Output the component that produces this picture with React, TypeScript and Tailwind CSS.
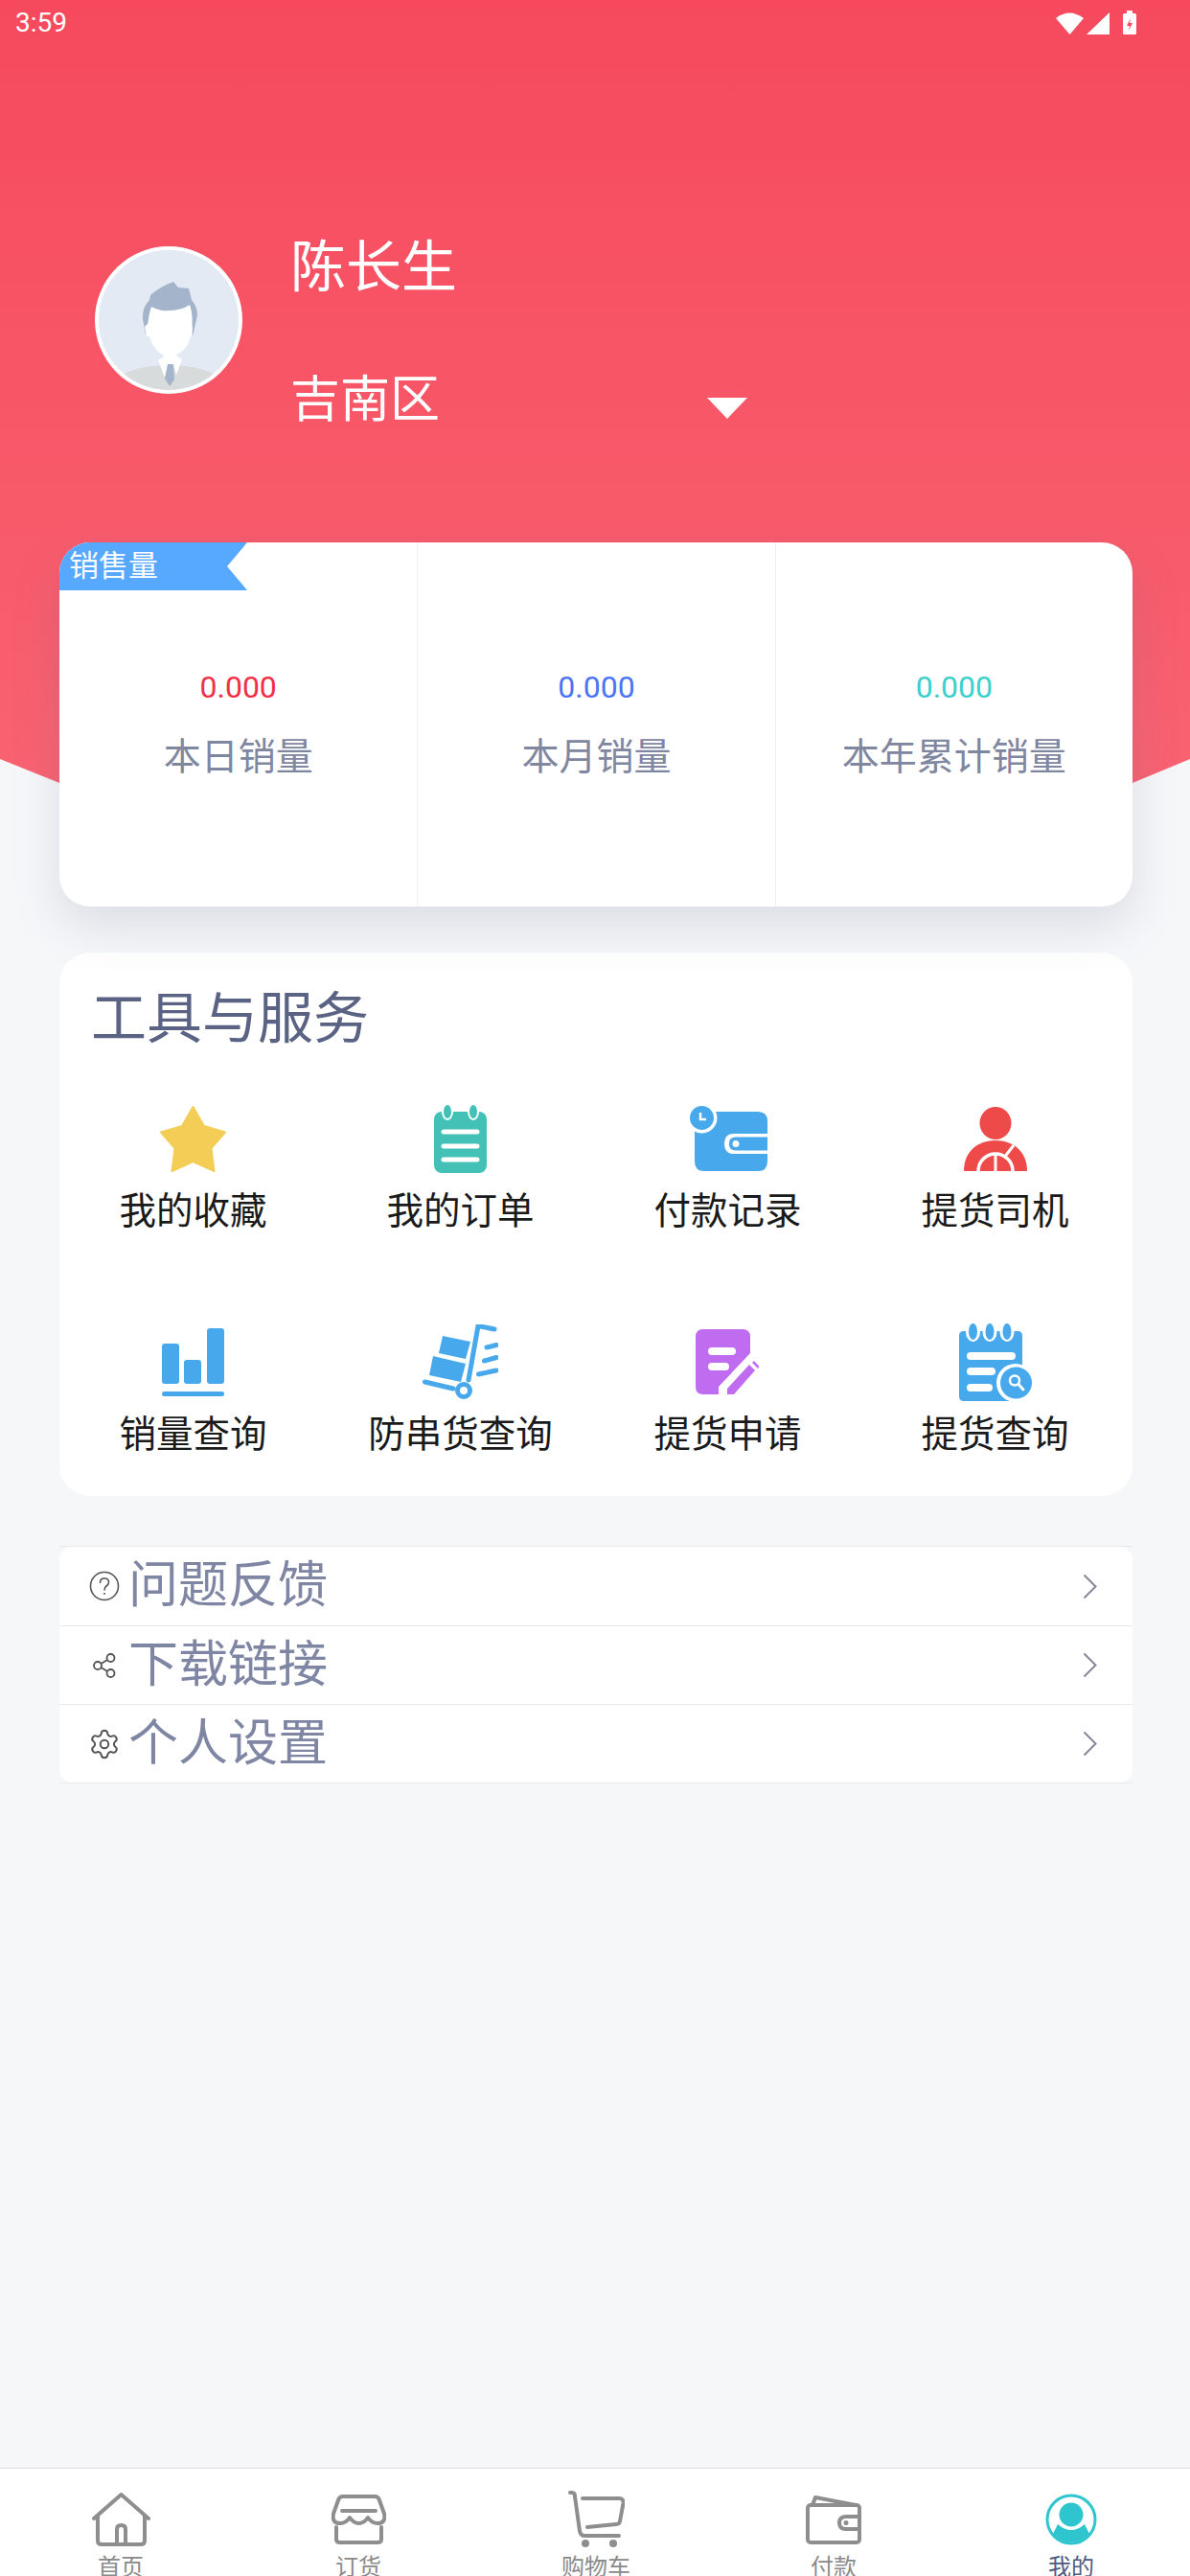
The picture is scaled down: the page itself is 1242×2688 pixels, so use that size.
import { Settings } from "lucide-react";
import type { ReactNode } from "react";

const stats = [
  { label: "本日销量", value: "0.000", color: "text-[#f22f45]" },
  { label: "本月销量", value: "0.000", color: "text-[#4a74f5]" },
  { label: "本年累计销量", value: "0.000", color: "text-[#3bd0cd]" },
];

function StarIcon() {
  return (
    <svg width="69" height="69" viewBox="0 0 69 69" fill="#f3cd55" stroke="#f3cd55" strokeWidth="2" strokeLinejoin="round">
      <polygon points="34.5,1 46,21 68,27.5 53.5,44 56.5,68 34.5,58 12.5,68 15.5,44 1,27.5 23,21" />
    </svg>
  );
}

function OrderIcon() {
  return (
    <svg width="55" height="71" viewBox="0 0 55 71">
      <rect x="0" y="7" width="55" height="64" rx="8" fill="#43c1b6" />
      <ellipse cx="14" cy="7" rx="6" ry="9" fill="#fff" />
      <ellipse cx="41" cy="7" rx="6" ry="9" fill="#fff" />
      <ellipse cx="14" cy="7" rx="4" ry="7" fill="#43c1b6" />
      <ellipse cx="41" cy="7" rx="4" ry="7" fill="#43c1b6" />
      <path d="M10 28H45M10 43H45M10 57H45" stroke="#fff" strokeWidth="5" strokeLinecap="round" />
    </svg>
  );
}

function PaymentIcon() {
  return (
    <svg width="82" height="68" viewBox="0 0 82 68">
      <path d="M6 16Q6 6 16 6H72Q82 6 82 16V58Q82 68 72 68H16Q6 68 6 58Z" fill="#47a8ec" />
      <circle cx="13.5" cy="12.5" r="16" fill="#fff" />
      <circle cx="13.5" cy="12.5" r="12.5" fill="#47a8ec" />
      <path d="M12 7V14H18" fill="none" stroke="#fff" strokeWidth="2.5" />
      <path d="M82 29H47Q37 29 37 39.5Q37 50 47 50H82Z" fill="#fff" />
      <path d="M82 32.5H49Q42 32.5 42 39.5Q42 46.5 49 46.5H82Z" fill="#47a8ec" />
      <circle cx="49" cy="39.5" r="3.5" fill="#fff" />
    </svg>
  );
}

function DriverIcon() {
  return (
    <svg width="66" height="67" viewBox="0 0 66 67">
      <ellipse cx="33" cy="17" rx="16.5" ry="17" fill="#ef4a4a" />
      <path d="M0 67C0 47 14 35 33 35C52 35 66 47 66 67Z" fill="#ef4a4a" />
      <path d="M15 67A18 18 0 0 1 51 67" fill="none" stroke="#fff" strokeWidth="3.5" />
      <path d="M33 50V67M52 40L42 53" stroke="#fff" strokeWidth="3" />
    </svg>
  );
}

function BarsIcon() {
  return (
    <svg width="65" height="71" viewBox="0 0 65 71" fill="#47a8ec">
      <rect x="0" y="16" width="18" height="42" rx="3" />
      <rect x="23" y="33" width="18" height="25" rx="3" />
      <rect x="47" y="0" width="18" height="58" rx="3" />
      <rect x="0" y="66" width="65" height="5" rx="2.5" />
    </svg>
  );
}

function TrolleyIcon() {
  return (
    <svg width="79" height="78" viewBox="0 0 79 78">
      <polygon points="21,12 50,18 45,36 17,30" fill="#47a8ec" />
      <polygon points="11,33 45,41 40,60 7,53" fill="#47a8ec" />
      <path d="M75 5L58 1.5L48 58M2.5 60L32 67M67 24L77 21.5M64.5 38L77 34.5M58.5 52L77 48" fill="none" stroke="#47a8ec" strokeWidth="5" strokeLinecap="round" />
      <circle cx="43" cy="69" r="6.5" fill="none" stroke="#47a8ec" strokeWidth="5" />
    </svg>
  );
}

function ApplyIcon() {
  return (
    <svg width="67" height="68" viewBox="0 0 67 68">
      <path d="M8 0H49Q57 0 57 8V25L24 60V68H8Q0 68 0 60V8Q0 0 8 0Z" fill="#c06cf0" />
      <path d="M17 23H38M17 39H31" stroke="#fff" strokeWidth="8" strokeLinecap="round" />
      <polygon points="33,62 56,37 62,43 40,68 33,68" fill="#c06cf0" />
      <polygon points="59,35 61,33 66.5,39 65,41" fill="#c06cf0" />
    </svg>
  );
}

function PickupSearchIcon() {
  return (
    <svg width="76" height="81" viewBox="0 0 76 81">
      <path d="M0 13Q0 8 5 8H61Q66 8 66 13V81H5Q0 81 0 76Z" fill="#47a8ec" />
      {[14.5, 32, 50].map((cx) => (
        <g key={cx}>
          <ellipse cx={cx} cy="9" rx="7.5" ry="10" fill="#fff" />
          <ellipse cx={cx} cy="8.5" rx="4.5" ry="8.5" fill="#47a8ec" />
        </g>
      ))}
      <path d="M12 34H55M12 50H34M12 67H31" stroke="#fff" strokeWidth="8" strokeLinecap="round" />
      <circle cx="59" cy="62" r="20" fill="#fff" />
      <circle cx="59.5" cy="62" r="16.5" fill="#47a8ec" />
      <circle cx="58" cy="59.5" r="5" fill="none" stroke="#fff" strokeWidth="2.5" />
      <path d="M62 63.5L67 69" stroke="#fff" strokeWidth="3" strokeLinecap="round" />
    </svg>
  );
}

const tools: { label: string; icon: ReactNode }[] = [
  { label: "我的收藏", icon: <StarIcon /> },
  { label: "我的订单", icon: <OrderIcon /> },
  { label: "付款记录", icon: <PaymentIcon /> },
  { label: "提货司机", icon: <DriverIcon /> },
  { label: "销量查询", icon: <BarsIcon /> },
  { label: "防串货查询", icon: <TrolleyIcon /> },
  { label: "提货申请", icon: <ApplyIcon /> },
  { label: "提货查询", icon: <PickupSearchIcon /> },
];

function QuestionIcon() {
  return (
    <svg width="32" height="32" viewBox="0 0 32 32" fill="none" stroke="#555" strokeWidth="1.6">
      <circle cx="16" cy="16" r="14.5" />
      <path d="M11.5 12.5Q11.5 8 16 8Q20.5 8 20.5 12Q20.5 14.5 18 16Q16 17.5 16 20" strokeLinecap="round" />
      <circle cx="16" cy="24" r="1" fill="#555" stroke="none" />
    </svg>
  );
}

function ShareIcon() {
  return (
    <svg width="24" height="26" viewBox="0 0 24 26" fill="none" stroke="#555" strokeWidth="1.8">
      <circle cx="5" cy="13" r="4" />
      <circle cx="18.5" cy="5" r="4" />
      <circle cx="18.5" cy="21" r="4" />
      <path d="M8.5 11L15 7M8.5 15L15 19" />
    </svg>
  );
}

function RowChevron() {
  return (
    <svg className="mr-[37px] ml-auto" width="15" height="27" viewBox="0 0 15 27" fill="none" stroke="#85879a" strokeWidth="2">
      <path d="M1.5 1.5L13.5 13.5L1.5 25.5" />
    </svg>
  );
}

const links: { label: string; icon: ReactNode }[] = [
  { label: "问题反馈", icon: <QuestionIcon /> },
  { label: "下载链接", icon: <ShareIcon /> },
  { label: "个人设置", icon: <Settings size={34} strokeWidth={1.4} color="#555" /> },
];

const tabStroke = { fill: "none", stroke: "#8e8e8e", strokeWidth: 4, strokeLinecap: "round", strokeLinejoin: "round" } as const;

function HomeTab() {
  return (
    <svg width="61" height="56" viewBox="0 0 61 56" {...tabStroke}>
      <path d="M2 27L30.5 2L59 27M6 24V50Q6 54 10 54H51Q55 54 55 50V24M26 54V38Q26 34 30.5 34Q35 34 35 38V54" />
    </svg>
  );
}

function StoreTab() {
  return (
    <svg width="57" height="52" viewBox="0 0 57 52" {...tabStroke}>
      <path d="M12 2H45Q49 2 50 6L55 20Q57 30 48 30Q42 30 38 24Q34 30 28.5 30Q23 30 19 24Q15 30 9 30Q0 30 2 20L7 6Q8 2 12 2ZM11 17H46M5 34V47Q5 50 9 50H48Q52 50 52 47V34" />
    </svg>
  );
}

function CartTab() {
  return (
    <svg width="60" height="60" viewBox="0 0 60 60" {...tabStroke}>
      <path d="M3 2H5Q8 2 8 6L13 42Q14 47 18 47H54M16 8H54Q59 8 58.5 13L55 32Q54.5 35 51 35L21 38" />
      <circle cx="19" cy="55" r="4" fill="#8e8e8e" stroke="none" />
      <circle cx="48" cy="55" r="4" fill="#8e8e8e" stroke="none" />
    </svg>
  );
}

function WalletTab() {
  return (
    <svg width="58" height="52" viewBox="0 0 58 52" {...tabStroke}>
      <rect x="2" y="11" width="54" height="39" rx="3" />
      <path d="M7 11L10 3L52 11M56 23H42Q35 23 35 29.5Q35 36 42 36H56" />
      <circle cx="42" cy="29.5" r="2.5" fill="#8e8e8e" stroke="none" />
    </svg>
  );
}

function MineTab() {
  return (
    <svg width="54" height="54" viewBox="0 0 54 54">
      <circle cx="27" cy="27" r="25" fill="#fff" stroke="#2fc5cf" strokeWidth="3" />
      <circle cx="27" cy="22" r="12.5" fill="#2fc5cf" />
      <path d="M8 42L13 32Q20 38 27 38Q34 38 41 32L46 42A25 25 0 0 1 8 42Z" fill="#2fc5cf" />
    </svg>
  );
}

const tabs: { label: string; icon: ReactNode; active?: boolean }[] = [
  { label: "首页", icon: <HomeTab /> },
  { label: "订货", icon: <StoreTab /> },
  { label: "购物车", icon: <CartTab /> },
  { label: "付款", icon: <WalletTab /> },
  { label: "我的", icon: <MineTab />, active: true },
];

function Avatar() {
  return (
    <div className="mt-[12px] h-[154px] w-[154px] shrink-0 overflow-hidden rounded-full border-[4px] border-white bg-[#e3eaf4]">
      <svg width="146" height="146" viewBox="4 4 146 146">
        <ellipse cx="77" cy="155" rx="66" ry="31" fill="#d8dbdc" />
        <path d="M53 92L50 76Q49 64 57 56L58 51Q68 42 82 37L87 43L98 44L101 56Q107 63 107 72L102 94L99 70L57 70Z" fill="#a3b4cb" />
        <path d="M52 84L56 80L58 94L54 94Z M102 84L98 80L97 94L101 94Z" fill="#fff" />
        <path d="M59 63Q68 68 77 67Q90 67 99 61Q103 72 101 90Q98 108 85 113Q77 116 70 113Q59 106 56 90Q55 74 59 63Z" fill="#fff" />
        <path d="M72 105V115L66 119L73 137L77 124H82L85 134L91 118L85 114V105Z" fill="#fff" />
        <polygon points="76,123 82,123 83,139 78,146 73,138" fill="#a3b4cb" />
      </svg>
    </div>
  );
}

export default function App() {
  return (
    <div className="flex h-[2688px] w-[1242px] flex-col overflow-hidden bg-[#f6f7f9] font-[Roboto,'Noto_Sans_CJK_SC',sans-serif]">
      <header className="h-[850px] shrink-0 bg-gradient-to-b from-[#f6495d] to-[#f96372] text-white [clip-path:polygon(0_0,100%_0,100%_792px,1182px_817px,621px_850px,62px_817px,0_792px)]">
        <div className="flex h-[48px] items-center justify-between pr-[56px] pl-[16px]">
          <span className="text-[28px] leading-none">3:59</span>
          <svg width="84" height="26" viewBox="0 0 84 26" fill="#fff">
            <path d="M0 8Q14 -3 29 8L14.5 25Z" />
            <polygon points="32,25 56,2 56,25" />
            <rect x="70" y="3" width="14" height="22" rx="1.5" />
            <rect x="74" y="0" width="6" height="4" />
            <polygon points="78,8 74,16 77,16 76,21 80,13 77,13" fill="#f84a5f" />
          </svg>
        </div>
        <div className="flex pt-[197px] pl-[99px]">
          <Avatar />
          <div className="ml-[50px] -mt-[1px] w-[477px]">
            <p className="text-[58px] leading-[70px]">陈长生</p>
            <div className="mt-[69px] flex items-center justify-between">
              <p className="text-[52px] leading-[70px]">吉南区</p>
              <svg className="mt-[15px]" width="42" height="22" viewBox="0 0 42 22" fill="#fff">
                <polygon points="0,0 42,0 21,22" />
              </svg>
            </div>
          </div>
        </div>
      </header>

      <main className="mr-[60px] ml-[62px] -mt-[284px] flex flex-col">
        <section className="relative z-10 grid h-[380px] grid-cols-3 overflow-hidden rounded-[32px] bg-white shadow-[0_20px_50px_rgba(95,105,140,0.18)]">
          {stats.map((stat, i) => (
            <div key={stat.label} className={`flex flex-col items-center pt-[128px] ${i > 0 ? "border-l border-[#eeeff2]" : ""}`}>
              <span className={`text-[32px] leading-[46px] ${stat.color}`}>{stat.value}</span>
              <span className="mt-[26px] text-[39px] leading-[48px] text-[#7f869f]">{stat.label}</span>
            </div>
          ))}
          <div className="absolute top-0 left-0 flex h-[50px] w-[196px] items-center bg-[#57a8ff] pl-[10px] text-[31px] text-white [clip-path:polygon(0_0,100%_0,175px_50%,100%_100%,0_100%)]">
            销售量
          </div>
        </section>

        <section className="mt-[48px] h-[567px] rounded-[32px] bg-white">
          <h2 className="px-[33px] pt-[29px] text-[58px] leading-[80px] font-normal text-[#5a6384]">工具与服务</h2>
          <div className="mt-[43px] grid w-[1116px] grid-cols-4 gap-y-[90px]">
            {tools.map((tool) => (
              <div key={tool.label} className="flex flex-col items-center">
                <div className="flex h-[84px] items-center justify-center">{tool.icon}</div>
                <p className="mt-[9px] text-[38.5px] leading-[50px] whitespace-nowrap text-[#1a1a1a]">{tool.label}</p>
              </div>
            ))}
          </div>
        </section>

        <section className="mt-[52px] border-y border-[#e8e9ec]">
          <div className="overflow-hidden rounded-[14px] bg-white">
            {links.map((link, i) => (
              <div key={link.label} className={`flex h-[82px] items-center ${i > 0 ? "border-t border-[#e8e9ec]" : ""}`}>
                <div className="flex w-[72px] items-center justify-center pl-[22px]">{link.icon}</div>
                <span className="text-[52px] leading-none text-[#7f86a3]">{link.label}</span>
                <RowChevron />
              </div>
            ))}
          </div>
        </section>
      </main>

      <nav className="mt-auto grid h-[113px] shrink-0 grid-cols-5 border-t border-[#dcdcdc] bg-white pl-[2px]">
        {tabs.map((tab) => (
          <div key={tab.label} className="flex flex-col items-center pt-[23px]">
            <div className="flex h-[60px] items-center justify-center">{tab.icon}</div>
            <span className={`mt-[6px] text-[24px] leading-[28px] ${tab.active ? "text-[#505a7f]" : "text-[#8a8a8a]"}`}>{tab.label}</span>
          </div>
        ))}
      </nav>
    </div>
  );
}
